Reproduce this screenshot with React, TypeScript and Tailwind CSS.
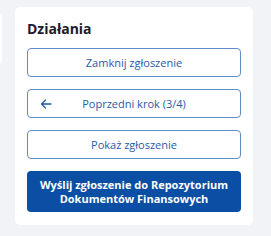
import React from "react";

export default function App() {
  return (
    <div className="w-[271px] h-[236px] bg-[#f2f3f7] overflow-hidden relative flex" style={{ fontFamily: '"Open Sans", "Noto Sans", sans-serif' }}>
      <div className="absolute left-[-10px] top-[14px] w-[12px] h-[50px] bg-white rounded-[4px]" />
      <div className="ml-[15px] mt-[7px] w-[238px] h-[218px] bg-white rounded-[5px] px-[12px] pt-[13px] pb-[11px] flex flex-col">
        <h2 className="text-[14px] font-bold text-[#1b1b2f] leading-[18px] mb-[10px]">Działania</h2>
        <div className="flex flex-col gap-[12px]">
          <button className="h-[29px] w-full rounded-[4px] border-[1.5px] border-[#5f8bc8] text-[#1f5aa8] text-[11px] leading-none">
            Zamknij zgłoszenie
          </button>
          <button className="h-[29px] w-full rounded-[4px] border-[1.5px] border-[#5f8bc8] text-[#1f5aa8] text-[11px] leading-none relative">
            <svg className="absolute left-[12px] top-1/2 -translate-y-1/2" width="12" height="10" viewBox="0 0 12 10" fill="none">
              <path d="M11 5H1.5M5.5 1L1.5 5L5.5 9" stroke="#1f5aa8" strokeWidth="1.3" strokeLinecap="round" strokeLinejoin="round" />
            </svg>
            Poprzedni krok (3/4)
          </button>
          <button className="h-[29px] w-full rounded-[4px] border-[1.5px] border-[#5f8bc8] text-[#1f5aa8] text-[11px] leading-none">
            Pokaż zgłoszenie
          </button>
          <button className="h-[41px] w-full rounded-[4px] bg-[#0b4fa4] text-white text-[11px] font-bold leading-[14px] px-[10px]">
            Wyślij zgłoszenie do Repozytorium<br />Dokumentów Finansowych
          </button>
        </div>
      </div>
    </div>
  );
}
